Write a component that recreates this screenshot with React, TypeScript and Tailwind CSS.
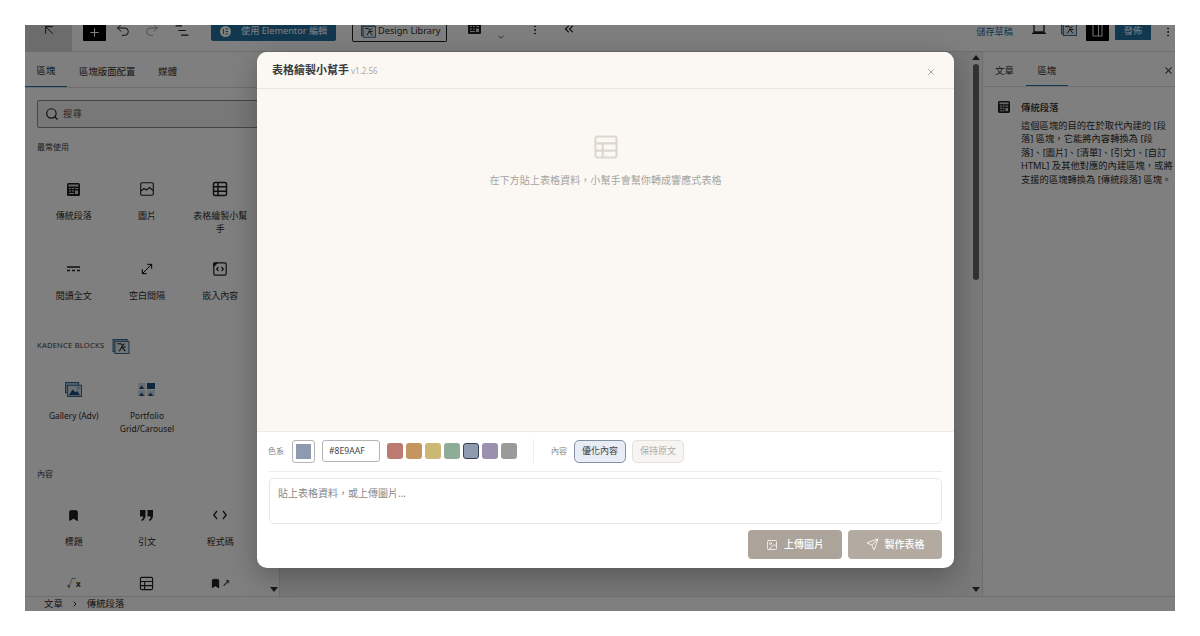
import type { ReactNode } from "react";
import {
  ArrowUpLeft,
  Bookmark,
  ChevronDown,
  ChevronRight,
  ChevronsLeft,
  EllipsisVertical,
  Image,
  MoveDiagonal,
  Plus,
  Redo2,
  Search,
  Send,
  Undo2,
  X,
} from "lucide-react";

const SWATCHES = [
  { color: "bg-[#bd7a72]", ring: "" },
  { color: "bg-[#c4955f]", ring: "" },
  { color: "bg-[#cbb875]", ring: "" },
  { color: "bg-[#8fac98]", ring: "" },
  { color: "bg-[#8e9aaf]", ring: "border border-[#3c4250]" },
  { color: "bg-[#9d8fae]", ring: "" },
  { color: "bg-[#9a9a9a]", ring: "" },
];

function ClassicIcon({ className = "h-[13px] w-[13px]" }: { className?: string }) {
  return (
    <svg viewBox="0 0 13 13" className={className}>
      <rect x="0" y="0" width="13" height="13" rx="1.5" fill="#1e1e1e" />
      <rect x="1.5" y="1.5" width="10" height="2" fill="#cfcfcf" />
      <path d="M2 5.5h2M5 5.5h2M8 5.5h3M2 8h2M5 8h2M2 10.5h5" stroke="#cfcfcf" strokeWidth="1.2" />
      <rect x="8" y="7.5" width="3" height="3.5" fill="#cfcfcf" />
    </svg>
  );
}

function GridTable({
  size = 16,
  stroke = "#1e1e1e",
  width = 1.5,
  full = false,
}: {
  size?: number;
  stroke?: string;
  width?: number;
  full?: boolean;
}) {
  return (
    <svg viewBox="0 0 16 16" width={size} height={size} fill="none" stroke={stroke} strokeWidth={width}>
      <rect x="1.5" y="1.5" width="13" height="13" rx="1.5" />
      <path d={full ? "M1.5 5.8h13M1.5 10.2h13M6 1.5v13" : "M1.5 5.8h13M1.5 10.2h13M6 5.8v8.7"} />
    </svg>
  );
}

function KadenceMark({ className }: { className: string }) {
  return (
    <svg viewBox="0 0 18 16" className={className} fill="none">
      <rect x="0.5" y="0.5" width="15" height="13" fill="#a9c3da" stroke="#2f5f86" />
      <rect x="2.5" y="2.5" width="15" height="13" fill="#dfe8ef" stroke="#2f5f86" />
      <path d="M5 5h4l1.500 2L13 5M9 8.500h5M7 13l3-4.500 3.500 4.500" stroke="#1e1e1e" strokeWidth="1.100" />
    </svg>
  );
}

function BlockItem({ icon, label, rowClass }: { icon: ReactNode; label?: ReactNode; rowClass: string }) {
  return (
    <div className={`flex flex-col items-center pt-[14px] text-center ${rowClass}`}>
      <div className="flex h-[18px] items-center justify-center">{icon}</div>
      {label && <div className="mt-3 px-[7px] text-[9px] leading-[12.5px] text-[#2c2c2c]">{label}</div>}
    </div>
  );
}

function SectionLabel({ children }: { children: ReactNode }) {
  return <div className="h-[12px] text-[8px] leading-[12px] text-[#3a3a3a]">{children}</div>;
}

function TopBar() {
  return (
    <div className="flex h-[27px] shrink-0 items-start overflow-hidden border-b border-[#dcdcdc] bg-white text-[#1e1e1e]">
      <div className="flex h-full w-[47px] items-start justify-center bg-[#d8d8d8]">
        <ArrowUpLeft className="-mt-[3px] h-[16px] w-[16px]" strokeWidth={1.5} />
      </div>
      <div className="ml-[11px] flex h-4 w-[23px] items-center justify-center rounded-b-[1px] bg-black">
        <Plus className="-mt-[2px] h-[13px] w-[13px] text-white" />
      </div>
      <Undo2 className="ml-[9px] mt-[-3px] h-[16px] w-[16px]" strokeWidth={1.5} />
      <Redo2 className="ml-[13px] mt-[-3px] h-[16px] w-[16px] text-[#9a9a9a]" strokeWidth={1.5} />
      <svg viewBox="0 0 14 12" className="ml-[15px] h-[11px] w-[14px]" stroke="#1e1e1e" strokeWidth="1.3">
        <path d="M0 1h7M3 6h8M6 11h8" />
      </svg>
      <div className="ml-[22px] flex h-4 w-[125px] items-center rounded-b-[2px] bg-[#22709f] pb-[4px] pl-[9px] text-[9.2px] leading-none text-white">
        <svg viewBox="0 0 11 11" className="mr-[10px] h-[11px] w-[11px]">
          <circle cx="5.5" cy="5.500" r="5.5" fill="#fff" />
          <path d="M3.500 3v5M5.500 3h2.500M5.500 5.500h2.500M5.500 8h2.500" stroke="#22709f" strokeWidth="1" />
        </svg>
        使用 Elementor 編輯
      </div>
      <div className="ml-4 flex h-[17px] w-[95px] items-center gap-[2px] rounded-b-[2px] border border-t-0 border-[#1e1e1e] pb-[4px] pl-2 text-[9.2px] leading-none text-[#2c2c2c]">
        <KadenceMark className="h-[14px] w-[15px]" />
        Design Library
      </div>
      <div className="ml-[21px] mt-[-4px]">
        <ClassicIcon />
      </div>
      <ChevronDown className="ml-[15px] mt-[7px] h-[10px] w-[10px] text-[#444]" />
      <EllipsisVertical className="ml-[23px] mt-[-1px] h-[12px] w-[12px]" />
      <ChevronsLeft className="ml-[21px] mt-[-3px] h-[14px] w-[14px]" strokeWidth={2} />
      <div className="ml-auto mt-[1px] text-[9.2px] leading-[11px] text-[#22709f]">儲存草稿</div>
      <svg viewBox="0 0 14 9" className="ml-[19px] h-[9px] w-[14px]" fill="none" stroke="#1e1e1e" strokeWidth="1.300">
        <path d="M2 0v7h10V0M0 8.300h14" />
      </svg>
      <KadenceMark className="ml-[15px] mt-[-3px] h-[14px] w-[16px]" />
      <div className="ml-[9px] flex h-4 w-[23px] justify-center rounded-b-[1px] bg-black">
        <svg viewBox="0 0 11 12" className="h-[12px] w-[11px]" fill="none" stroke="#d8d8d8" strokeWidth="1.100">
          <path d="M1 0v11h9V0M6.500 0v11" />
        </svg>
      </div>
      <div className="ml-[6px] flex h-[15px] w-[36px] items-center justify-center rounded-b-[1px] bg-[#22709f] pb-[3px] text-[9.2px] leading-none text-white">發佈</div>
      <EllipsisVertical className="ml-[11px] mr-px mt-[1px] h-[12px] w-[12px]" />
    </div>
  );
}

function LeftSidebar() {
  return (
    <div className="flex w-[255px] shrink-0 flex-col overflow-hidden border-r border-[#dcdcdc]">
      <div className="flex h-[36px] shrink-0 items-stretch border-b border-[#dcdcdc] pt-[5px] text-[9.4px] text-[#2c2c2c]">
        <div className="flex w-[42px] items-center justify-center border-b border-[#22709f]">區塊</div>
        <div className="ml-3 flex items-center">區塊版面配置</div>
        <div className="ml-[23px] flex items-center">媒體</div>
      </div>
      <div className="flex min-h-0 flex-1">
        <div className="flex w-[243px] flex-col overflow-hidden pl-3">
          <div className="mt-3 flex h-[28px] w-[240px] shrink-0 items-center rounded-[2px] border border-[#8a8a8a] bg-[#f0f0f0] pl-[7px] text-[9.4px] text-[#555]">
            <Search className="mr-[4px] h-[14px] w-[14px] text-[#1e1e1e]" strokeWidth={2} />
            搜尋
          </div>
          <div className="mt-[13px]">
            <SectionLabel>最常使用</SectionLabel>
          </div>
          <div className="mt-[13px] grid w-[220px] grid-cols-3">
            <BlockItem rowClass="h-[80px]" icon={<ClassicIcon />} label="傳統段落" />
            <BlockItem
              rowClass="h-[80px]"
              icon={
                <svg viewBox="0 0 14 14" className="h-[14px] w-[14px]" fill="none" stroke="#1e1e1e" strokeWidth="1.100">
                  <rect x="0.7" y="0.7" width="12.600" height="12.600" rx="1.200" />
                  <path d="M1 9l3-2.500 2.500 1.500L9.500 5.500 13 8.500" />
                </svg>
              }
              label="圖片"
            />
            <BlockItem rowClass="h-[80px]" icon={<GridTable size={16} width={1.5} full />} label="表格繪製小幫手" />
            <BlockItem
              rowClass="h-[80px]"
              icon={
                <svg viewBox="0 0 13 6" className="h-[6px] w-[13px]" stroke="#1e1e1e" strokeWidth="1.3">
                  <path d="M0 1h13M0 4.5h3M5 4.5h3M10 4.5h3" />
                </svg>
              }
              label="閱讀全文"
            />
            <BlockItem rowClass="h-[80px]" icon={<MoveDiagonal className="h-[16px] w-[16px]" strokeWidth={1.5} />} label="空白間隔" />
            <BlockItem
              rowClass="h-[80px]"
              icon={
                <svg viewBox="0 0 14 14" className="h-[14px] w-[14px]" fill="none" stroke="#1e1e1e" strokeWidth="1.2">
                  <rect x="0.8" y="0.8" width="12.4" height="12.4" rx="1.5" />
                  <path d="M5.5 5L3.7 7l1.8 2M8.5 5l1.8 2-1.8 2" />
                  <path d="M1 1h3L1 4z" fill="#1e1e1e" />
                </svg>
              }
              label="嵌入內容"
            />
          </div>
          <div className="flex h-[40px] shrink-0 items-center gap-[8px] text-[7.6px] tracking-[0.2px] text-[#3a3a3a]">
            KADENCE BLOCKS
            <KadenceMark className="h-[15px] w-[18px]" />
          </div>
          <div className="grid w-[220px] grid-cols-3">
            <BlockItem
              rowClass="h-[102px]"
              icon={
                <svg viewBox="0 0 18 16" className="h-[15px] w-[17px]" fill="none">
                  <rect x="0.5" y="0.5" width="14" height="11" fill="#a9c3da" stroke="#2f5f86" />
                  <rect x="2.5" y="3.5" width="15" height="12" fill="#cfdde8" stroke="#2f5f86" />
                  <path d="M4 14l4-6 3 3 2-1.5 3 4.5z" fill="#1f4f7d" />
                  <circle cx="14" cy="6.5" r="1.2" fill="#fff" stroke="#2f5f86" strokeWidth="0.6" />
                </svg>
              }
              label={<span className="text-[8.4px]">Gallery (Adv)</span>}
            />
            <BlockItem
              rowClass="h-[102px]"
              icon={
                <svg viewBox="0 0 17 13" className="h-[13px] w-[17px]">
                  <rect x="0" y="0" width="7.5" height="6" fill="#cfdde8" />
                  <path d="M1 6l2.5-3.5L6.5 6z" fill="#1f4f7d" />
                  <rect x="9" y="0" width="8" height="6" fill="#1f4f7d" />
                  <rect x="0" y="7" width="7.5" height="6" fill="#cfdde8" />
                  <path d="M1 13l2.5-3.5L6.5 13z" fill="#1f4f7d" />
                  <rect x="9" y="7" width="8" height="6" fill="#cfdde8" />
                  <path d="M10 13l2.5-3.5L15.5 13z" fill="#1f4f7d" />
                </svg>
              }
              label={
                <span className="text-[8.4px]">
                  Portfolio
                  <br />
                  Grid/Carousel
                </span>
              }
            />
          </div>
          <SectionLabel>內容</SectionLabel>
          <div className="mt-3 grid w-[220px] grid-cols-3">
            <BlockItem rowClass="h-[68px]" icon={<Bookmark className="h-[13px] w-[13px]" fill="#1e1e1e" strokeWidth={1.5} />} label="標題" />
            <BlockItem
              rowClass="h-[68px]"
              icon={
                <svg viewBox="0 0 13 11" className="h-[11px] w-[13px]" fill="#1e1e1e">
                  <path d="M0 0h5.5v5.5C5.5 8.5 4 10 1.8 11l-.5-1.2C2.6 9 3.2 8 3.2 6.5H0zM7.5 0H13v5.5c0 3-1.5 4.5-3.7 5.5l-.5-1.2c1.3-.8 1.9-1.8 1.9-3.3H7.5z" />
                </svg>
              }
              label="引文"
            />
            <BlockItem
              rowClass="h-[68px]"
              icon={
                <svg viewBox="0 0 14 10" className="h-[10px] w-[14px]" fill="none" stroke="#1e1e1e" strokeWidth="1.300">
                  <path d="M4 1L0.800 5 4 9M10 1l3.200 4L10 9" />
                </svg>
              }
              label="程式碼"
            />
            <BlockItem rowClass="h-[68px]" icon={<span className="text-[9px] font-semibold leading-none text-[#1e1e1e]">√x</span>} />
            <BlockItem rowClass="h-[68px]" icon={<GridTable size={15} width={1.2} />} />
            <BlockItem
              rowClass="h-[68px]"
              icon={
                <div className="flex items-center gap-[1px]">
                  <Bookmark className="h-[13px] w-[11px]" fill="#1e1e1e" strokeWidth={1.5} />
                  <span className="text-[8px] font-bold leading-none text-[#1e1e1e]">↗</span>
                </div>
              }
            />
          </div>
        </div>
        <div className="flex w-[11px] shrink-0 flex-col items-center justify-end pb-[4px]">
          <div className="h-0 w-0 border-x-[4px] border-t-[5px] border-x-transparent border-t-[#333]" />
        </div>
      </div>
    </div>
  );
}

function RightSidebar() {
  return (
    <div className="flex w-[193px] shrink-0 flex-col overflow-hidden border-l border-[#dcdcdc]">
      <div className="flex h-[35px] shrink-0 items-stretch border-b border-[#dcdcdc] pt-[5px] text-[9.4px] text-[#2c2c2c]">
        <div className="ml-[12px] flex items-center">文章</div>
        <div className="ml-[12px] flex w-[42px] items-center justify-center border-b border-[#22709f]">區塊</div>
        <X className="ml-auto mr-[1px] mt-[8px] h-[11px] w-[11px] text-[#1e1e1e]" strokeWidth={2.2} />
      </div>
      <div className="flex pl-[15px] pt-[14px]">
        <ClassicIcon className="h-[12px] w-[12px]" />
        <div className="ml-[11px] min-w-0 text-[#2c2c2c]">
          <div className="whitespace-nowrap text-[9.4px] font-medium leading-[13px]">傳統段落</div>
          <div className="mt-[5px] whitespace-nowrap text-[9.3px] leading-[13.4px]">
            這個區塊的目的在於取代內建的 [段
            <br />
            落] 區塊&#xFF0C;它能將內容轉換為 [段
            <br />
            落]、[圖片]、[清單]、[引文]、[自訂
            <br />
            HTML] 及其他對應的內建區塊&#xFF0C;或將
            <br />
            支援的區塊轉換為 [傳統段落] 區塊。
          </div>
        </div>
      </div>
    </div>
  );
}

function Canvas() {
  return (
    <div className="flex min-w-0 flex-1 justify-end bg-[#f0f0f0]">
      <div className="flex w-[12px] flex-col items-center bg-[#f4f4f4] pt-[3px]">
        <div className="h-0 w-0 border-x-[4px] border-b-[5px] border-x-transparent border-b-[#333]" />
        <div className="mt-[4px] h-[216px] w-[6px] rounded-full bg-[#666]" />
        <div className="mb-[4px] mt-auto h-0 w-0 border-x-[4px] border-t-[5px] border-x-transparent border-t-[#333]" />
      </div>
    </div>
  );
}

function Modal() {
  return (
    <div className="absolute left-[232px] top-[27px] flex h-[516px] w-[697px] flex-col overflow-hidden rounded-[10px] bg-white shadow-[0_8px_28px_rgba(0,0,0,0.28)]">
      <div className="flex h-[37px] shrink-0 items-center border-b border-[#e8e4de] bg-[#fbf8f3] pl-[15px] pr-[18px]">
        <span className="text-[11px] font-bold text-[#3a3a3a]">表格繪製小幫手</span>
        <span className="ml-[2px] mt-px text-[8px] text-[#aaa]">v1.2.56</span>
        <X className="ml-auto mt-[3px] h-[10px] w-[10px] text-[#777]" strokeWidth={1.5} />
      </div>
      <div className="flex h-[342px] shrink-0 flex-col items-center bg-[#fbf8f3] pt-[45px]">
        <GridTable size={26} stroke="#dcd8d0" width={1.3} />
        <div className="mt-[13px] text-[10.1px] leading-[14px] text-[#a5a5a0]">在下方貼上表格資料&#xFF0C;小幫手會幫你轉成響應式表格</div>
      </div>
      <div className="flex flex-1 flex-col border-t border-[#eeeae4] pl-[11px] pr-[12px]">
        <div className="flex h-[40px] shrink-0 items-center border-b border-[#ececec] pb-[1px]">
          <span className="text-[8px] text-[#888]">色系</span>
          <div className="ml-[8px] flex h-[23px] w-[23px] items-center justify-center rounded-[3px] border border-[#b5b5b5]">
            <div className="h-[15px] w-[15px] bg-[#8e9aaf]" />
          </div>
          <div className="ml-[7px] flex h-[22px] w-[58px] items-center rounded-[3px] border border-[#b5b5b5] pl-[6px] text-[8.6px] text-[#444]">#8E9AAF</div>
          <div className="ml-[7px] flex gap-[3px]">
            {SWATCHES.map((s) => (
              <div key={s.color} className={`h-[16px] w-[16px] rounded-[3px] ${s.color} ${s.ring}`} />
            ))}
          </div>
          <div className="ml-[16px] h-[24px] w-px bg-[#eee]" />
          <span className="ml-[17px] text-[8px] text-[#888]">內容</span>
          <div className="ml-[7px] flex h-[23px] w-[52px] items-center justify-center rounded-[5px] border border-[#8490a6] bg-[#e8ecf4] text-[9px] text-[#444]">優化內容</div>
          <div className="ml-[6px] flex h-[23px] w-[52px] items-center justify-center rounded-[5px] border border-[#e5e2dc] bg-[#f7f5f1] text-[9px] text-[#aaa]">保持原文</div>
        </div>
        <div className="ml-px mt-[6px] h-[46px] shrink-0 rounded-[5px] border border-[#e6e6e6] pl-[8px] pt-[7px] text-[10px] leading-[15px] text-[#888]">貼上表格資料&#xFF0C;或上傳圖片...</div>
        <div className="mt-[6px] flex justify-end gap-[6px]">
          <div className="flex h-[29px] w-[94px] items-center justify-center gap-[6px] rounded-[4px] bg-[#aca49a] text-[10px] font-medium text-white">
            <Image className="h-[12px] w-[12px]" strokeWidth={1.5} />
            上傳圖片
          </div>
          <div className="flex h-[29px] w-[94px] items-center justify-center gap-[6px] rounded-[4px] bg-[#b3aba1] text-[10px] font-medium text-white">
            <Send className="h-[13px] w-[13px]" strokeWidth={1.5} />
            製作表格
          </div>
        </div>
      </div>
    </div>
  );
}

export default function App() {
  return (
    <div className="h-[636px] w-[1200px] overflow-hidden bg-white p-[25px] font-['Noto_Sans','Noto_Sans_CJK_TC',sans-serif]">
      <div className="relative flex h-[586px] w-[1150px] flex-col overflow-hidden bg-white">
        <TopBar />
        <div className="flex min-h-0 flex-1">
          <LeftSidebar />
          <Canvas />
          <RightSidebar />
        </div>
        <div className="flex h-[15px] shrink-0 items-center gap-[8px] border-t border-[#dcdcdc] bg-white pl-[19px] text-[9.4px] text-[#2c2c2c]">
          <span>文章</span>
          <ChevronRight className="h-[8px] w-[8px]" strokeWidth={3} />
          <span>傳統段落</span>
        </div>
        <div className="absolute inset-0 bg-black/50" />
        <Modal />
      </div>
    </div>
  );
}
